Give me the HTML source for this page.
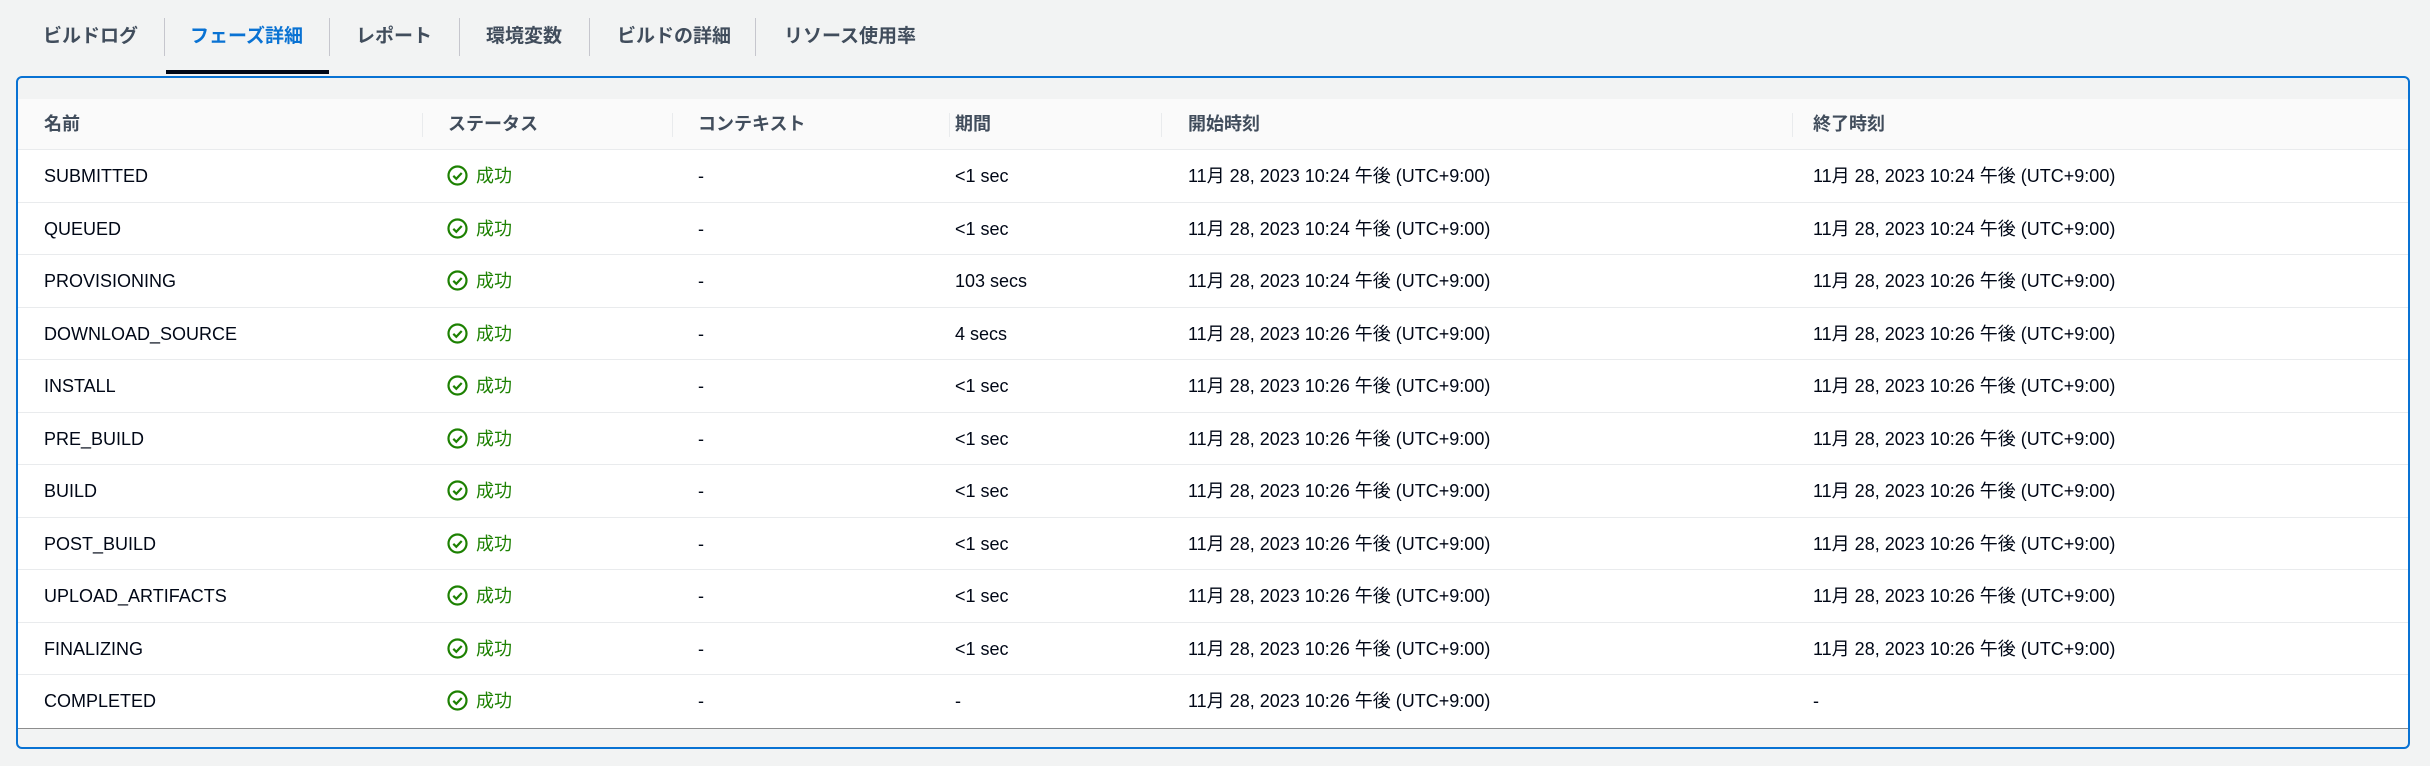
<!DOCTYPE html>
<html><head><meta charset="utf-8"><style>
*{margin:0;padding:0;box-sizing:border-box}
body{width:2430px;height:766px;background:#f2f3f3;font-family:"Liberation Sans","Noto Sans CJK JP",sans-serif;position:relative;overflow:hidden;color:#000716}
.tab{position:absolute;top:25px;font-size:19px;font-weight:bold;color:#414d5c;line-height:24px}
.sep{position:absolute;top:18px;width:1px;height:38px;background:#c6c6cd}
.ul{position:absolute;left:166px;top:70px;width:163px;height:4px;background:#000716}
.box{position:absolute;left:16px;top:76px;width:2394px;height:673px;border:2px solid #0972d3;border-radius:6px;background:#f2f3f3;overflow:hidden}
.tbl{position:absolute;left:0;top:21px;width:2390px;background:#fff;border-bottom:1px solid #8d8d8d}
.hdr{height:51px;background:#fafafa;border-bottom:1px solid #e9ebed;position:relative}
.row{height:52.5px;border-bottom:1px solid #e9ebed;position:relative;font-size:18px}
.row:last-child{border-bottom:none}
.c{position:absolute;top:0;line-height:52px;white-space:nowrap}
.hdr .c{font-weight:bold;color:#414d5c;font-size:18px;line-height:51px}
.hs{position:absolute;top:14px;width:1px;height:24px;background:#e9ebed}
.ok{color:#1d8102}
.ok svg{position:absolute;left:-1px;top:15px}
.ok span{position:absolute;left:28px}
</style></head><body>
<div class="tab" style="left:43px">ビルドログ</div>
<div class="sep" style="left:164px"></div>
<div class="tab" style="left:190px;color:#0972d3">フェーズ詳細</div>
<div class="sep" style="left:329px"></div>
<div class="tab" style="left:356px">レポート</div>
<div class="sep" style="left:459px"></div>
<div class="tab" style="left:486px">環境変数</div>
<div class="sep" style="left:589px"></div>
<div class="tab" style="left:617px">ビルドの詳細</div>
<div class="sep" style="left:755px"></div>
<div class="tab" style="left:784px">リソース使用率</div>
<div class="ul"></div>
<div class="box"><div class="tbl">
<div class="hdr">
<div class="c" style="left:26px">名前</div><div class="hs" style="left:404px"></div>
<div class="c" style="left:430px">ステータス</div><div class="hs" style="left:654px"></div>
<div class="c" style="left:680px">コンテキスト</div><div class="hs" style="left:931px"></div>
<div class="c" style="left:937px">期間</div><div class="hs" style="left:1143px"></div>
<div class="c" style="left:1170px">開始時刻</div><div class="hs" style="left:1774px"></div>
<div class="c" style="left:1795px">終了時刻</div>
</div>
<div class="row"><div class="c" style="left:26px">SUBMITTED</div><div class="c ok" style="left:430px"><svg width="21" height="21" viewBox="0 0 21 21"><circle cx="10.5" cy="10.5" r="9" fill="none" stroke="#1d8102" stroke-width="2.2"/><path d="M6.3 10.8l3 3 5.4-5.8" fill="none" stroke="#1d8102" stroke-width="2.2"/></svg><span>成功</span></div><div class="c" style="left:680px">-</div><div class="c" style="left:937px">&lt;1 sec</div><div class="c" style="left:1170px">11月 28, 2023 10:24 午後 (UTC+9:00)</div><div class="c" style="left:1795px">11月 28, 2023 10:24 午後 (UTC+9:00)</div></div>
<div class="row"><div class="c" style="left:26px">QUEUED</div><div class="c ok" style="left:430px"><svg width="21" height="21" viewBox="0 0 21 21"><circle cx="10.5" cy="10.5" r="9" fill="none" stroke="#1d8102" stroke-width="2.2"/><path d="M6.3 10.8l3 3 5.4-5.8" fill="none" stroke="#1d8102" stroke-width="2.2"/></svg><span>成功</span></div><div class="c" style="left:680px">-</div><div class="c" style="left:937px">&lt;1 sec</div><div class="c" style="left:1170px">11月 28, 2023 10:24 午後 (UTC+9:00)</div><div class="c" style="left:1795px">11月 28, 2023 10:24 午後 (UTC+9:00)</div></div>
<div class="row"><div class="c" style="left:26px">PROVISIONING</div><div class="c ok" style="left:430px"><svg width="21" height="21" viewBox="0 0 21 21"><circle cx="10.5" cy="10.5" r="9" fill="none" stroke="#1d8102" stroke-width="2.2"/><path d="M6.3 10.8l3 3 5.4-5.8" fill="none" stroke="#1d8102" stroke-width="2.2"/></svg><span>成功</span></div><div class="c" style="left:680px">-</div><div class="c" style="left:937px">103 secs</div><div class="c" style="left:1170px">11月 28, 2023 10:24 午後 (UTC+9:00)</div><div class="c" style="left:1795px">11月 28, 2023 10:26 午後 (UTC+9:00)</div></div>
<div class="row"><div class="c" style="left:26px">DOWNLOAD_SOURCE</div><div class="c ok" style="left:430px"><svg width="21" height="21" viewBox="0 0 21 21"><circle cx="10.5" cy="10.5" r="9" fill="none" stroke="#1d8102" stroke-width="2.2"/><path d="M6.3 10.8l3 3 5.4-5.8" fill="none" stroke="#1d8102" stroke-width="2.2"/></svg><span>成功</span></div><div class="c" style="left:680px">-</div><div class="c" style="left:937px">4 secs</div><div class="c" style="left:1170px">11月 28, 2023 10:26 午後 (UTC+9:00)</div><div class="c" style="left:1795px">11月 28, 2023 10:26 午後 (UTC+9:00)</div></div>
<div class="row"><div class="c" style="left:26px">INSTALL</div><div class="c ok" style="left:430px"><svg width="21" height="21" viewBox="0 0 21 21"><circle cx="10.5" cy="10.5" r="9" fill="none" stroke="#1d8102" stroke-width="2.2"/><path d="M6.3 10.8l3 3 5.4-5.8" fill="none" stroke="#1d8102" stroke-width="2.2"/></svg><span>成功</span></div><div class="c" style="left:680px">-</div><div class="c" style="left:937px">&lt;1 sec</div><div class="c" style="left:1170px">11月 28, 2023 10:26 午後 (UTC+9:00)</div><div class="c" style="left:1795px">11月 28, 2023 10:26 午後 (UTC+9:00)</div></div>
<div class="row"><div class="c" style="left:26px">PRE_BUILD</div><div class="c ok" style="left:430px"><svg width="21" height="21" viewBox="0 0 21 21"><circle cx="10.5" cy="10.5" r="9" fill="none" stroke="#1d8102" stroke-width="2.2"/><path d="M6.3 10.8l3 3 5.4-5.8" fill="none" stroke="#1d8102" stroke-width="2.2"/></svg><span>成功</span></div><div class="c" style="left:680px">-</div><div class="c" style="left:937px">&lt;1 sec</div><div class="c" style="left:1170px">11月 28, 2023 10:26 午後 (UTC+9:00)</div><div class="c" style="left:1795px">11月 28, 2023 10:26 午後 (UTC+9:00)</div></div>
<div class="row"><div class="c" style="left:26px">BUILD</div><div class="c ok" style="left:430px"><svg width="21" height="21" viewBox="0 0 21 21"><circle cx="10.5" cy="10.5" r="9" fill="none" stroke="#1d8102" stroke-width="2.2"/><path d="M6.3 10.8l3 3 5.4-5.8" fill="none" stroke="#1d8102" stroke-width="2.2"/></svg><span>成功</span></div><div class="c" style="left:680px">-</div><div class="c" style="left:937px">&lt;1 sec</div><div class="c" style="left:1170px">11月 28, 2023 10:26 午後 (UTC+9:00)</div><div class="c" style="left:1795px">11月 28, 2023 10:26 午後 (UTC+9:00)</div></div>
<div class="row"><div class="c" style="left:26px">POST_BUILD</div><div class="c ok" style="left:430px"><svg width="21" height="21" viewBox="0 0 21 21"><circle cx="10.5" cy="10.5" r="9" fill="none" stroke="#1d8102" stroke-width="2.2"/><path d="M6.3 10.8l3 3 5.4-5.8" fill="none" stroke="#1d8102" stroke-width="2.2"/></svg><span>成功</span></div><div class="c" style="left:680px">-</div><div class="c" style="left:937px">&lt;1 sec</div><div class="c" style="left:1170px">11月 28, 2023 10:26 午後 (UTC+9:00)</div><div class="c" style="left:1795px">11月 28, 2023 10:26 午後 (UTC+9:00)</div></div>
<div class="row"><div class="c" style="left:26px">UPLOAD_ARTIFACTS</div><div class="c ok" style="left:430px"><svg width="21" height="21" viewBox="0 0 21 21"><circle cx="10.5" cy="10.5" r="9" fill="none" stroke="#1d8102" stroke-width="2.2"/><path d="M6.3 10.8l3 3 5.4-5.8" fill="none" stroke="#1d8102" stroke-width="2.2"/></svg><span>成功</span></div><div class="c" style="left:680px">-</div><div class="c" style="left:937px">&lt;1 sec</div><div class="c" style="left:1170px">11月 28, 2023 10:26 午後 (UTC+9:00)</div><div class="c" style="left:1795px">11月 28, 2023 10:26 午後 (UTC+9:00)</div></div>
<div class="row"><div class="c" style="left:26px">FINALIZING</div><div class="c ok" style="left:430px"><svg width="21" height="21" viewBox="0 0 21 21"><circle cx="10.5" cy="10.5" r="9" fill="none" stroke="#1d8102" stroke-width="2.2"/><path d="M6.3 10.8l3 3 5.4-5.8" fill="none" stroke="#1d8102" stroke-width="2.2"/></svg><span>成功</span></div><div class="c" style="left:680px">-</div><div class="c" style="left:937px">&lt;1 sec</div><div class="c" style="left:1170px">11月 28, 2023 10:26 午後 (UTC+9:00)</div><div class="c" style="left:1795px">11月 28, 2023 10:26 午後 (UTC+9:00)</div></div>
<div class="row"><div class="c" style="left:26px">COMPLETED</div><div class="c ok" style="left:430px"><svg width="21" height="21" viewBox="0 0 21 21"><circle cx="10.5" cy="10.5" r="9" fill="none" stroke="#1d8102" stroke-width="2.2"/><path d="M6.3 10.8l3 3 5.4-5.8" fill="none" stroke="#1d8102" stroke-width="2.2"/></svg><span>成功</span></div><div class="c" style="left:680px">-</div><div class="c" style="left:937px">-</div><div class="c" style="left:1170px">11月 28, 2023 10:26 午後 (UTC+9:00)</div><div class="c" style="left:1795px">-</div></div>
</div></div>
</body></html>
